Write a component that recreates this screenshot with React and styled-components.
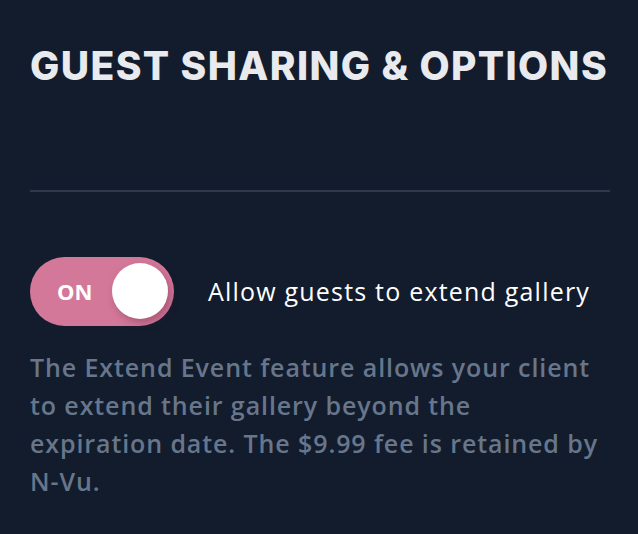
import React from "react";
import styled, { createGlobalStyle } from "styled-components";

const GlobalStyle = createGlobalStyle`
    html, body {
        margin: 0;
        padding: 0;
        background: #121c2d;
    }
`;

const Panel = styled.div`
    width: 638px;
    min-height: 534px;
    box-sizing: border-box;
    padding: 43px 28px 0 30px;
    background: #121c2d;
    font-family: "Open Sans", "Liberation Sans", sans-serif;
`;

const Title = styled.h1`
    margin: 0;
    font-family: Inter, "Liberation Sans", sans-serif;
    font-size: 39px;
    font-weight: 800;
    line-height: 1.2;
    letter-spacing: 1.4px;
    color: #e8eaee;
    text-transform: uppercase;
    white-space: nowrap;
`;

const Divider = styled.hr`
    margin: 100px 0 0 0;
    height: 2px;
    border: 0;
    background: #2d3a4c;
`;

const OptionRow = styled.div`
    margin-top: 65px;
    display: flex;
    align-items: center;
    gap: 34px;
`;

const Toggle = styled.button`
    width: 144px;
    height: 69px;
    padding: 0 6px 0 27px;
    box-sizing: border-box;

    display: flex;
    align-items: center;
    justify-content: space-between;

    border: none;
    border-radius: 35px;
    background: ${(p) => (p.$on ? "#d4789a" : "#4b5563")};
    cursor: pointer;
`;

const ToggleText = styled.span`
    font-family: "Open Sans", "Liberation Sans", sans-serif;
    font-size: 22px;
    font-weight: 700;
    color: #ffffff;
`;

const Knob = styled.span`
    width: 56px;
    height: 56px;
    border-radius: 50%;
    background: #ffffff;
    box-shadow: 3px 4px 8px rgba(90, 25, 50, 0.35);
`;

const Label = styled.span`
    font-size: 25px;
    letter-spacing: 1.2px;
    color: #ffffff;
`;

const Description = styled.p`
    margin: 22px 0 0 0;
    font-size: 25px;
    font-weight: 600;
    line-height: 38px;
    letter-spacing: 0.9px;
    color: #68768b;
`;

function App() {
    return (
        <>
            <GlobalStyle />
            <Panel>
                <Title>Guest Sharing &amp; Options</Title>
                <Divider />

                <OptionRow>
                    <Toggle $on>
                        <ToggleText>ON</ToggleText>
                        <Knob />
                    </Toggle>
                    <Label>Allow guests to extend gallery</Label>
                </OptionRow>

                <Description>
                    The Extend Event feature allows your client to extend their gallery beyond the
                    expiration date. The $9.99 fee is retained by N-Vu.
                </Description>
            </Panel>
        </>
    );
}

export default App;
